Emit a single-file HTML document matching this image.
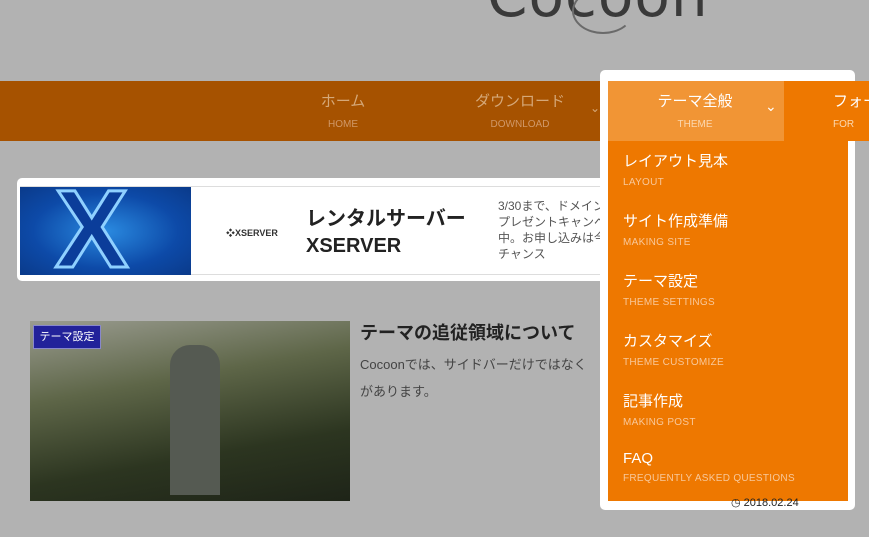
<!DOCTYPE html>
<html><head><meta charset="utf-8"><style>
body{margin:0;width:869px;height:537px;overflow:hidden;background:#b2b2b2;position:relative;font-family:"Liberation Sans","Noto Sans CJK JP",sans-serif}
.a{position:absolute}
.nav{left:0;top:81px;width:869px;height:60px;background:#a65200}
.ni{position:absolute;top:0;height:60px;text-align:center}
.ni .j{font-size:15px;margin-top:9px;color:#d5a878}
.ni .e{font-size:10px;margin-top:8px;color:#d09868;font-family:"Liberation Sans Narrow","Liberation Sans",sans-serif}
.dd{left:600px;top:70px;width:255px;height:440px;background:#fff;border-radius:5px}
.or{left:608px;top:81px;width:240px;height:420px;background:#ee7800}
.it{position:absolute;left:623px;color:#fff}
.it .j{font-size:15px}
.it .e{font-size:10px;color:#f8c89a;margin-top:6px;letter-spacing:.3px}
</style></head><body>
<div class="a" style="left:487px;top:-38px;font-size:58px;color:#3a3a3a;font-family:'DejaVu Sans',sans-serif;letter-spacing:1px">Cocoon</div>
<div class="a" style="left:572px;top:-12px;width:58px;height:42px;border:2px solid #6a6a6a;border-radius:50%;border-top-color:transparent;border-right-color:transparent"></div>
<div class="a nav"></div>
<div class="ni" style="left:300px;width:86px;top:81px"><div class="j">ホーム</div><div class="e">HOME</div></div>
<div class="ni" style="left:460px;width:120px;top:81px"><div class="j">ダウンロード</div><div class="e">DOWNLOAD</div></div>
<div class="a" style="left:590px;top:101px;color:#d5a878;font-size:12px">⌄</div>
<div class="a dd"></div>
<div class="a or"></div>
<div class="a" style="left:784px;top:81px;width:85px;height:60px;background:#ee7800"></div>
<div class="a" style="left:608px;top:81px;width:176px;height:60px;background:#f19535"></div>
<div class="ni" style="left:630px;width:130px;top:81px"><div class="j" style="color:#fff">テーマ全般</div><div class="e" style="color:#fbd8b0">THEME</div></div>
<div class="a" style="left:765px;top:98px;color:#fff;font-size:14px">⌄</div>
<div class="ni" style="left:833px;width:60px;top:81px;text-align:left"><div class="j" style="color:#fff">フォー</div><div class="e" style="color:#fbd8b0">FOR</div></div>
<div class="it" style="top:150px"><div class="j">レイアウト見本</div><div class="e">LAYOUT</div></div>
<div class="it" style="top:210px"><div class="j">サイト作成準備</div><div class="e">MAKING SITE</div></div>
<div class="it" style="top:270px"><div class="j">テーマ設定</div><div class="e">THEME SETTINGS</div></div>
<div class="it" style="top:330px"><div class="j">カスタマイズ</div><div class="e">THEME CUSTOMIZE</div></div>
<div class="it" style="top:390px"><div class="j">記事作成</div><div class="e">MAKING POST</div></div>
<div class="it" style="top:450px"><div class="j">FAQ</div><div class="e">FREQUENTLY ASKED QUESTIONS</div></div>
<div class="a" style="left:731px;top:496px;font-size:11px;color:#222">◷ 2018.02.24</div>
<div class="a" style="left:17px;top:178px;width:583px;height:103px;background:#fff;border-radius:5px 0 0 5px"></div>
<div class="a" style="left:20px;top:186px;width:580px;height:89px;border-top:1px solid #ddd;border-bottom:1px solid #ddd;box-sizing:border-box"></div>
<div class="a" style="left:20px;top:187px;width:171px;height:88px;background:radial-gradient(ellipse at 50% 50%,#2a8ae0,#0d4aa8 60%,#0a3a8a)"></div>
<div class="a" style="left:55px;top:175px;font-size:110px;font-weight:bold;color:#0b3d9a;-webkit-text-stroke:3px #8fd0ff;line-height:1">X</div>
<div class="a" style="left:226px;top:226px;font-size:9px;color:#333;font-weight:bold">❖XSERVER</div>
<div class="a" style="left:306px;top:206px;font-size:20px;font-weight:bold;color:#222;line-height:27px">レンタルサーバー<br>XSERVER</div>
<div class="a" style="left:498px;top:198px;font-size:12px;color:#555;line-height:16px;width:102px;overflow:hidden;white-space:nowrap">3/30まで、ドメイン<br>プレゼントキャンペ<br>中。お申し込みは今<br>チャンス</div>
<div class="a" style="left:30px;top:321px;width:320px;height:180px;background:linear-gradient(170deg,#9a9c90 0%,#5e6648 35%,#2c3520 70%,#1e2418 100%)"></div>
<div class="a" style="left:170px;top:345px;width:50px;height:150px;background:#555a52;border-radius:20px 20px 0 0"></div>
<div class="a" style="left:33px;top:325px;width:66px;height:22px;background:#22229a;border:1px solid #8888cc;color:#fff;font-size:11px;line-height:22px;text-align:center">テーマ設定</div>
<div class="a" style="left:360px;top:319px;font-size:18px;font-weight:bold;color:#222">テーマの追従領域について</div>
<div class="a" style="left:360px;top:351px;font-size:13px;color:#444;line-height:27px;white-space:nowrap">Cocoonでは、サイドバーだけではなく<br>があります。</div>
</body></html>
